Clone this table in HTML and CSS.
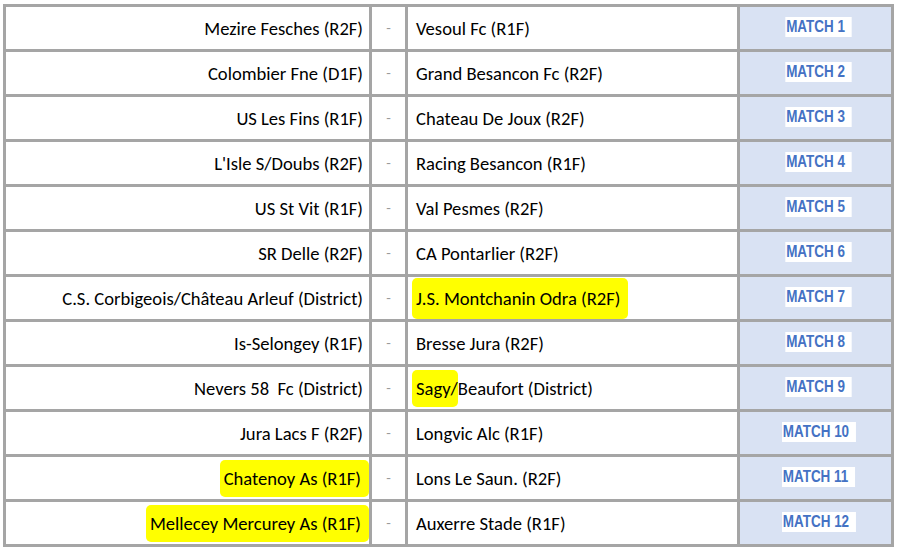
FILE: index.html
```html
<!DOCTYPE html>
<html lang="fr">
<head>
<meta charset="utf-8">
<link rel="stylesheet" href="styles.css">
</head>
<body>
<table class="draw">
  <tr>
    <td class="home w1">Mezire Fesches (R2F)</td>
    <td class="sep w2">-</td>
    <td class="away w3">Vesoul Fc (R1F)</td>
    <td class="match w4"><span class="tag">MATCH 1</span></td>
  </tr>
  <tr>
    <td class="home">Colombier Fne (D1F)</td>
    <td class="sep">-</td>
    <td class="away">Grand Besancon Fc (R2F)</td>
    <td class="match"><span class="tag">MATCH 2</span></td>
  </tr>
  <tr>
    <td class="home">US Les Fins (R1F)</td>
    <td class="sep">-</td>
    <td class="away">Chateau De Joux (R2F)</td>
    <td class="match"><span class="tag">MATCH 3</span></td>
  </tr>
  <tr>
    <td class="home">L'Isle S/Doubs (R2F)</td>
    <td class="sep">-</td>
    <td class="away">Racing Besancon (R1F)</td>
    <td class="match"><span class="tag">MATCH 4</span></td>
  </tr>
  <tr>
    <td class="home">US St Vit (R1F)</td>
    <td class="sep">-</td>
    <td class="away">Val Pesmes (R2F)</td>
    <td class="match"><span class="tag">MATCH 5</span></td>
  </tr>
  <tr>
    <td class="home">SR Delle (R2F)</td>
    <td class="sep">-</td>
    <td class="away">CA Pontarlier (R2F)</td>
    <td class="match"><span class="tag">MATCH 6</span></td>
  </tr>
  <tr>
    <td class="home">C.S. Corbigeois/Château Arleuf (District)</td>
    <td class="sep">-</td>
    <td class="away"><span class="hl hl-right">J.S. Montchanin Odra (R2F)</span></td>
    <td class="match"><span class="tag">MATCH 7</span></td>
  </tr>
  <tr>
    <td class="home">Is-Selongey (R1F)</td>
    <td class="sep">-</td>
    <td class="away">Bresse Jura (R2F)</td>
    <td class="match"><span class="tag">MATCH 8</span></td>
  </tr>
  <tr>
    <td class="home">Nevers 58&nbsp; Fc (District)</td>
    <td class="sep">-</td>
    <td class="away"><span class="hl hl-short">Sagy/</span>Beaufort (District)</td>
    <td class="match"><span class="tag">MATCH 9</span></td>
  </tr>
  <tr>
    <td class="home">Jura Lacs F (R2F)</td>
    <td class="sep">-</td>
    <td class="away">Longvic Alc (R1F)</td>
    <td class="match"><span class="tag">MATCH 10</span></td>
  </tr>
  <tr>
    <td class="home"><span class="hl hl-left">Chatenoy As (R1F)</span></td>
    <td class="sep">-</td>
    <td class="away">Lons Le Saun. (R2F)</td>
    <td class="match"><span class="tag">MATCH 11</span></td>
  </tr>
  <tr>
    <td class="home"><span class="hl hl-left">Mellecey Mercurey As (R1F)</span></td>
    <td class="sep">-</td>
    <td class="away">Auxerre Stade (R1F)</td>
    <td class="match"><span class="tag">MATCH 12</span></td>
  </tr>
</table>
</body>
</html>
```

FILE: styles.css
```css
html, body {
  margin: 0;
  padding: 0;
  background: #ffffff;
}

body {
  padding: 4px 0 0 3px;
  font-family: Carlito, "Liberation Sans", Arial, sans-serif;
  font-size: 18.6px;
  color: #000000;
}

.draw {
  border-collapse: separate;
  border-spacing: 0;
  table-layout: fixed;
  width: 891px;
  border-top: 3px solid #a5a5a5;
  border-left: 3px solid #a5a5a5;
}

.draw td {
  box-sizing: border-box;
  height: 45px;
  padding: 0;
  border-right: 3px solid #a5a5a5;
  border-bottom: 3px solid #a5a5a5;
  vertical-align: middle;
  white-space: nowrap;
}

.w1 { width: 366px; }
.w2 { width: 36px; }
.w3 { width: 332px; }
.w4 { width: 154px; }

.home {
  text-align: right;
  padding-right: 6px !important;
}

.sep {
  text-align: center;
  color: #9a9a9a;
  font-size: 15px;
}

.away {
  text-align: left;
  padding-left: 8px !important;
}

.match {
  background: #d9e2f3;
  text-align: center;
}

.tag {
  display: inline-block;
  background: #ffffff;
  color: #4472c4;
  font-family: "Liberation Sans", Arial, sans-serif;
  font-weight: bold;
  font-size: 16px;
  line-height: 20px;
  padding: 0 8px 0 1px;
  margin-left: 6px;
  margin-bottom: 5px;
  transform: scaleX(0.84);
}

.hl {
  background: #ffff00;
  border-radius: 5px;
  padding: 7px 0;
}

.hl-left {
  padding-left: 4px;
  padding-right: 8px;
  margin-right: -6px;
}

.hl-right {
  padding-top: 9px;
  padding-bottom: 9px;
  padding-left: 4px;
  padding-right: 8px;
  margin-left: -4px;
}

.hl-short {
  padding-left: 4px;
  margin-left: -4px;
}
```
